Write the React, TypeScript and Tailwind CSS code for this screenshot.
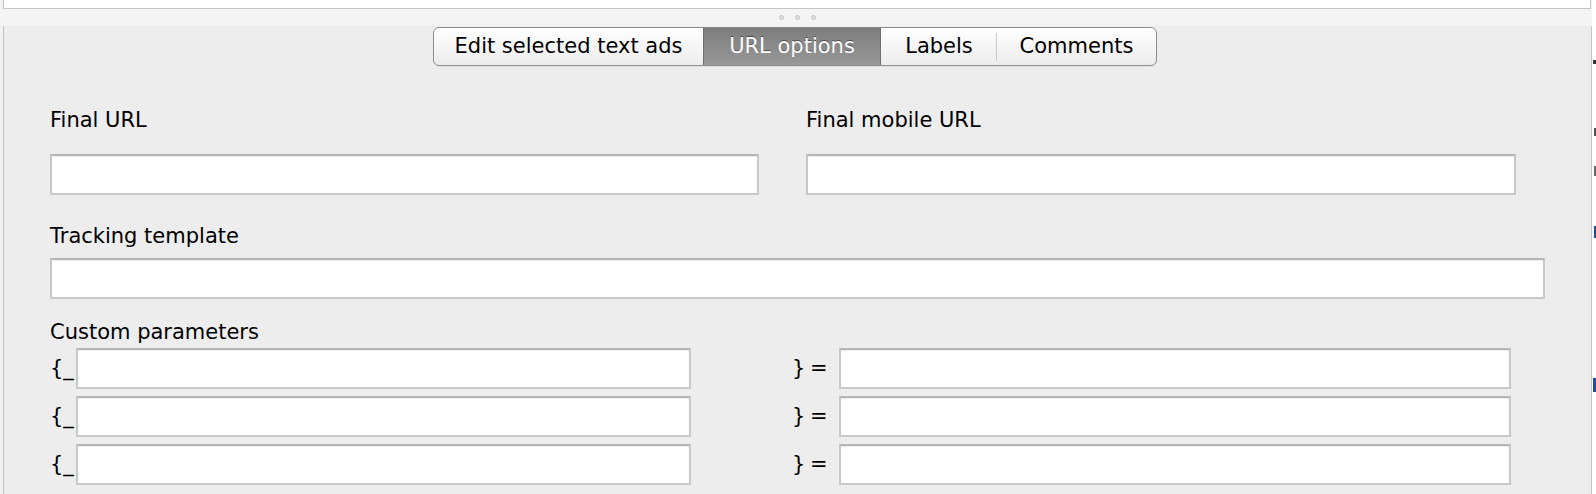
import React from 'react';

const tabs = [
  { label: 'Edit selected text ads', width: 'w-[269px]', active: false, divider: false },
  { label: 'URL options', width: 'w-[178px]', active: true, divider: false },
  { label: 'Labels', width: 'w-[116px]', active: false, divider: true },
  { label: 'Comments', width: 'w-[159px]', active: false, divider: false },
];

const TextBox: React.FC<{ className?: string }> = ({ className = '' }) => (
  <div
    className={`h-[41px] bg-white border-2 border-[#c8c8c8] border-t-[#b6b6b6] shadow-[inset_0_1px_1px_rgba(0,0,0,0.08)] ${className}`}
  />
);

const SegmentedTabs: React.FC = () => (
  <div className="flex w-fit h-[39px] ml-[429px] border border-[#8e8e8e] rounded-[6px] overflow-hidden shadow-[0_1px_0_rgba(0,0,0,0.05)] bg-gradient-to-b from-white to-[#ececec]">
    {tabs.map(tab => (
      <div key={tab.label} className={`relative flex items-center justify-center ${tab.width} ${tab.active ? 'bg-gradient-to-b from-[#7d7d7d] to-[#989898] text-white [text-shadow:0_-1px_0_rgba(0,0,0,0.45)] border-x border-[#6f6f6f]' : 'text-black'}`}>
        <span className="text-[21px] leading-none">{tab.label}</span>
        {tab.divider && <span className="absolute right-0 top-[5px] bottom-[4px] w-px bg-[#c9c9c9]" />}
      </div>
    ))}
  </div>
);

export default function App() {
  return (
    <div className="w-[1596px] h-[494px] overflow-hidden flex bg-[#f1f1f1] font-['DejaVu_Sans',sans-serif] text-black">
      <div className="w-[1592px] flex flex-col">
        {/* top table edge */}
        <div className="h-[9px] ml-[3px] mr-[1px] bg-white border-x border-b border-[#c4c4c4]" />

        {/* splitter grip */}
        <div className="h-[17px] bg-[#f4f4f4] flex items-center justify-center gap-[11px] pl-[2px]">
          <span className="w-[5px] h-[5px] rounded-full bg-[#e2e2e2] border border-[#c6c6c6]" />
          <span className="w-[5px] h-[5px] rounded-full bg-[#e2e2e2] border border-[#c6c6c6]" />
          <span className="w-[5px] h-[5px] rounded-full bg-[#e2e2e2] border border-[#c6c6c6]" />
        </div>

        <div className="flex-1 ml-[3px] border-l border-r border-[#c4c4c4] bg-[#ededed] pt-px">
          <SegmentedTabs />

          <div className="pl-[46px]">
            <div className="flex gap-[47px] mt-[42px]">
              <div className="w-[709px]">
                <div className="text-[21px] leading-[24px] h-[24px]">Final URL</div>
                <TextBox className="mt-[22px]" />
              </div>
              <div className="w-[710px]">
                <div className="text-[21px] leading-[24px] h-[24px]">Final mobile URL</div>
                <TextBox className="mt-[22px]" />
              </div>
            </div>

            <div className="mt-[29px] w-[1495px]">
              <div className="text-[21px] leading-[24px] h-[24px]">Tracking template</div>
              <TextBox className="mt-[10px]" />
            </div>

            <div className="mt-[21px]">
              <div className="text-[21px] leading-[24px] h-[24px]">Custom parameters</div>
              <div className="mt-[4px] flex flex-col gap-[7px]">
                {[0, 1, 2].map(i => (
                  <div key={i} className="grid grid-cols-[26px_615px_101px_47px_672px] items-center">
                    <span className="text-[21px] leading-none">{'{_'}</span>
                    <TextBox />
                    <span />
                    <span className="text-[21px] leading-none tracking-[-1px]">{'} ='}</span>
                    <TextBox />
                  </div>
                ))}
              </div>
            </div>
          </div>
        </div>
      </div>

      {/* edge of neighbouring window */}
      <div className="flex-1 bg-white flex flex-col items-end">
        <span className="mt-[60px] w-[3px] h-[4px] bg-[#333]" />
        <span className="mt-[64px] w-[2px] h-[8px] bg-[#555]" />
        <span className="mt-[30px] w-[2px] h-[10px] bg-[#666]" />
        <span className="mt-[50px] w-[2px] h-[12px] bg-[#1d4f9c]" />
        <span className="mt-[140px] w-[3px] h-[14px] bg-[#1d4f9c]" />
      </div>
    </div>
  );
}
